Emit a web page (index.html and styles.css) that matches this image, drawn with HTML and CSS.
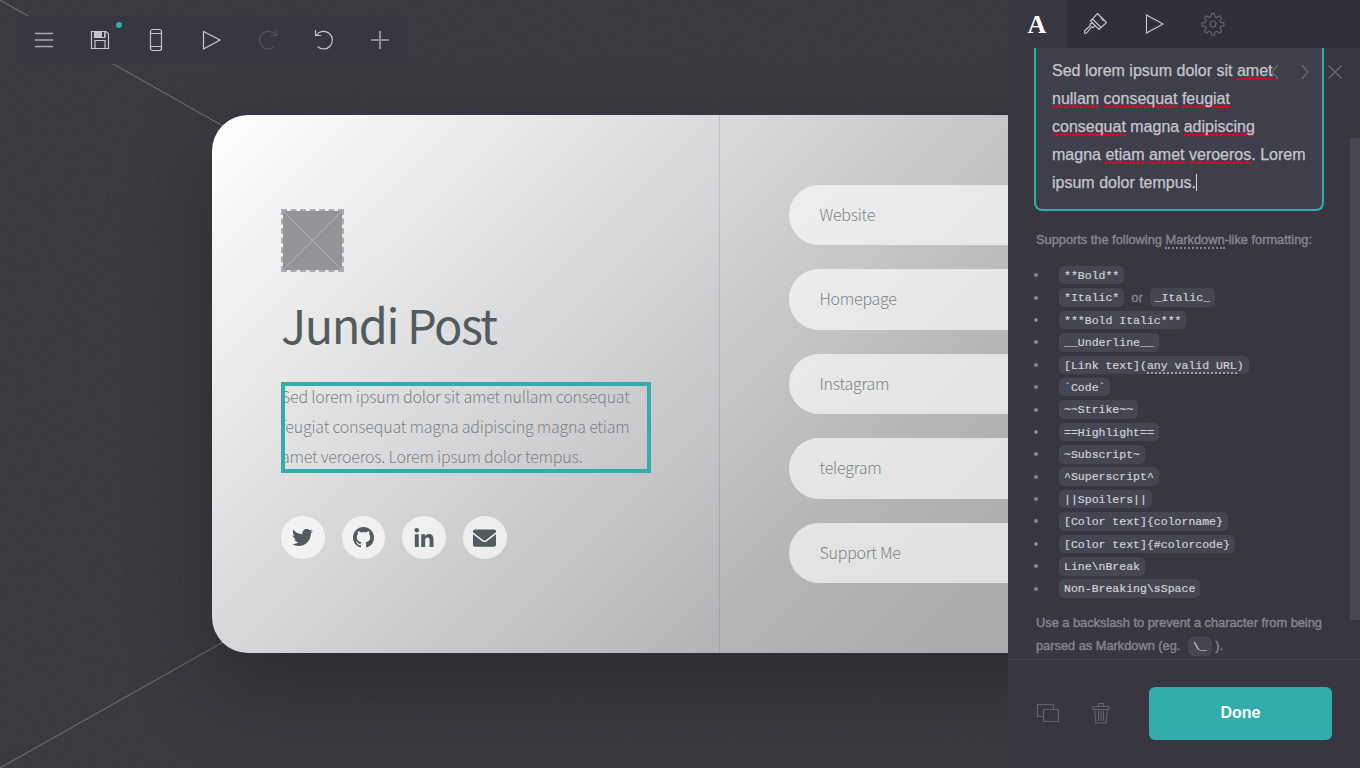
FILE: index.html
```html
<!DOCTYPE html>
<html lang="en">
<head>
<meta charset="utf-8">
<title>Site editor</title>
<link rel="stylesheet" href="styles.css">
</head>
<body>
<div class="editor">
  <main class="stage">
    <svg class="backdrop" width="1360" height="768" viewBox="0 0 1360 768">
      <filter id="grain" x="0" y="0" width="100%" height="100%">
        <feTurbulence type="fractalNoise" baseFrequency="0.55" numOctaves="2" seed="4"/>
      </filter>
      <rect class="grain" width="1360" height="768" filter="url(#grain)"/>
      <path class="diagonal" d="M0 0L1360 768M0 768L1360 0"/>
    </svg>

    <nav class="toolbar">
      <button class="tool"><svg viewBox="0 0 24 24"><path class="bars" d="M3 5.500h18M3 12h18M3 18.500h18"/></svg></button>
      <button class="tool"><svg viewBox="0 0 24 24"><path d="M3.500 3.500h14.500l2.500 2.500v14.500h-17zM7 20.500v-8h10v8"/><path d="M6.500 3.500h10.500v6h-10.500z"/><path class="solid" d="M7 4h7v5.500h-7zM16 4h1v5h-1z"/></svg><i class="unsaved"></i></button>
      <button class="tool"><svg viewBox="0 0 24 24"><rect x="6.500" y="1.500" width="11" height="21" rx="2"/><path d="M6.500 5.500h11M6.500 18.500h11"/></svg></button>
      <button class="tool"><svg viewBox="0 0 24 24"><path d="M3.500 3.500v17.500L20 12z"/></svg></button>
      <button class="tool dim"><svg viewBox="0 0 24 24"><path d="M18.500 18.500A8.800 8.800 0 1 1 19.500 7M20.500 2v5.500h-5.500"/></svg></button>
      <button class="tool"><svg viewBox="0 0 24 24"><path d="M5.500 18.500A8.800 8.800 0 1 0 4.500 7M3.500 2v5.500h5.500"/></svg></button>
      <button class="tool"><svg viewBox="0 0 24 24"><path class="plus" d="M12 3v18M3 12h18"/></svg></button>
    </nav>

    <article class="card">
      <section class="profile">
        <div class="placeholder"><svg viewBox="0 0 59 59"><path d="M0 0L59 59M59 0L0 59"/></svg></div>
        <h1 class="name">Jundi Post</h1>
        <p class="bio">Sed lorem ipsum dolor sit amet nullam consequat<br>feugiat consequat magna adipiscing magna etiam<br>amet veroeros. Lorem ipsum dolor tempus.</p>
        <div class="socials">
          <a class="social"><svg viewBox="0 0 512 512"><path d="M459.400 151.700c.3 4.500.3 9.100.3 13.600 0 138.700-105.600 298.600-298.600 298.600-59.500 0-114.700-17.200-161.100-47.100 8.400 1 16.600 1.300 25.300 1.300 49.100 0 94.200-16.600 130.300-44.800-46.100-1-84.800-31.200-98.100-72.800 6.500 1 13 1.600 19.800 1.600 9.400 0 18.800-1.300 27.600-3.600-48.100-9.700-84.100-52-84.100-103v-1.300c14 7.800 30.200 12.700 47.400 13.300-28.300-18.800-46.800-51-46.800-87.400 0-19.500 5.200-37.400 14.300-53 51.700 63.700 129.300 105.300 216.400 109.800-1.600-7.800-2.600-15.900-2.600-24 0-57.800 46.800-104.900 104.900-104.900 30.200 0 57.500 12.700 76.700 33.100 23.700-4.500 46.500-13.300 66.600-25.300-7.800 24.400-24.400 44.800-46.100 57.800 21.100-2.300 41.600-8.100 60.400-16.200-14.300 20.800-32.200 39.300-52.600 54.300z"/></svg></a>
          <a class="social"><svg viewBox="0 0 16 16"><path d="M8 0C3.580 0 0 3.580 0 8c0 3.540 2.290 6.530 5.470 7.590.4.070.55-.17.55-.38 0-.19-.01-.82-.01-1.490-2.010.37-2.530-.49-2.690-.94-.09-.23-.48-.94-.82-1.130-.28-.15-.68-.52-.01-.53.63-.01 1.080.58 1.230.82.72 1.210 1.870.87 2.330.66.07-.52.28-.87.51-1.070-1.780-.2-3.640-.89-3.640-3.950 0-.87.31-1.590.82-2.150-.08-.2-.36-1.020.08-2.120 0 0 .67-.21 2.200.82a7.600 7.600 0 0 1 4 0c1.530-1.040 2.200-.82 2.200-.82.44 1.100.16 1.920.08 2.120.51.56.82 1.270.82 2.150 0 3.070-1.870 3.750-3.650 3.950.29.25.54.73.54 1.480 0 1.070-.01 1.930-.01 2.200 0 .21.15.46.55.38A8 8 0 0 0 16 8c0-4.420-3.580-8-8-8z"/></svg></a>
          <a class="social linkedin"><svg viewBox="0 0 448 448"><path d="M100.300 448H7.400V148.900h92.900zM53.800 108.100C24.100 108.100 0 83.500 0 53.800a53.800 53.800 0 0 1 107.600 0c0 29.700-24.100 54.300-53.800 54.300zM447.900 448h-92.700V302.400c0-34.700-.7-79.200-48.300-79.200-48.300 0-55.700 37.700-55.700 76.700V448h-92.800V148.900h89.100v40.800h1.300c12.400-23.500 42.700-48.300 87.900-48.300 94 0 111.300 61.900 111.300 142.300V448z"/></svg></a>
          <a class="social mail"><svg viewBox="0 0 24 18"><path d="M2 0h20a2 2 0 0 1 2 2v1L13.500 11a2.500 2.500 0 0 1-3 0L0 3V2a2 2 0 0 1 2-2zM0 5l9.500 7.300a4.200 4.200 0 0 0 5 0L24 5v11a2 2 0 0 1-2 2H2a2 2 0 0 1-2-2z"/></svg></a>
        </div>
      </section>
      <section class="links">
        <a class="link">Website</a>
        <a class="link">Homepage</a>
        <a class="link">Instagram</a>
        <a class="link">telegram</a>
        <a class="link">Support Me</a>
      </section>
    </article>
  </main>

  <aside class="panel">
    <nav class="tabs">
      <button class="tab active">A</button>
      <button class="tab"><svg viewBox="0 0 24 24"><path d="M13.500 1.500L22.500 10.500l-7.500 7-8.500-8.500zM8.500 7l8.500 8.500M14.500 2.500l2 2.500M17 5l.5 2M19 7l-.5 2M8.500 11l2.500 2.500-2 2-1.500-.5-4 5c-1 1.500-2.500 2-3 .5s.5-2 1.500-3l4.500-4-.5-1.500z"/></svg></button>
      <button class="tab"><svg viewBox="0 0 24 24"><path d="M4.500 3v18L21 12z"/></svg></button>
      <button class="tab dim"><svg viewBox="0 0 24 24"><circle cx="12" cy="12" r="3"/><path d="M10.600 1.500h2.800l.6 3.100 2.100.9 2.600-1.800 2 2-1.800 2.600.9 2.100 3.100.6v2.800l-3.100.6-.9 2.100 1.800 2.600-2 2-2.600-1.800-2.100.9-.6 3.100h-2.800l-.6-3.100-2.100-.9-2.600 1.800-2-2 1.800-2.600-.9-2.100-3.100-.6v-2.800l3.100-.6.9-2.100-1.800-2.600 2-2 2.600 1.800 2.100-.9z"/></svg></button>
    </nav>
    <div class="content">
      <div class="field">Sed lorem ipsum dolor sit <s>amet</s><br><s>nullam</s> <s>consequat</s> <s>feugiat</s><br><s>consequat</s> magna <s>adipiscing</s><br>magna <s>etiam</s> <s>amet</s> <s>veroeros</s>. Lorem<br>ipsum dolor tempus.<i class="caret"></i></div>
      <p class="help">Supports the following <span class="dotted">Markdown</span>-like formatting:</p>
      <ul class="syntax">
        <li><code>**Bold**</code></li>
        <li><code>*Italic*</code><span class="or">or</span><code>_Italic_</code></li>
        <li><code>***Bold Italic***</code></li>
        <li><code>__Underline__</code></li>
        <li><code>[Link text](<span class="dotted">any valid URL</span>)</code></li>
        <li><code>`Code`</code></li>
        <li><code>~~Strike~~</code></li>
        <li><code>==Highlight==</code></li>
        <li><code>~Subscript~</code></li>
        <li><code>^Superscript^</code></li>
        <li><code>||Spoilers||</code></li>
        <li><code>[Color text]{colorname}</code></li>
        <li><code>[Color text]{#colorcode}</code></li>
        <li><code>Line\nBreak</code></li>
        <li><code>Non-Breaking\sSpace</code></li>
      </ul>
      <p class="help note">Use a backslash to prevent a character from being<br>parsed as Markdown (eg. <code>\_</code> ).</p>
      <div class="pager">
        <svg viewBox="0 0 16 16"><path d="M11 1L5 8l6 7"/></svg>
        <svg viewBox="0 0 16 16"><path d="M5 1l6 7-6 7"/></svg>
        <svg viewBox="0 0 16 16"><path d="M1.500 1.500l13 13M14.500 1.500l-13 13"/></svg>
      </div>
      <i class="thumb"></i>
    </div>
    <footer class="actions">
      <svg class="copy" viewBox="0 0 24 24"><path d="M7 15.500H1.500v-12h16V8M7.500 8.500h15v12h-15z"/></svg>
      <svg class="trash" viewBox="0 0 24 24"><path d="M4 5.500h16v3H4zM9.500 5.500v-3h5v3M5.500 8.500l1.500 13.500h10l1.500-13.500M9.500 10v10M12 10v10M14.500 10v10"/></svg>
      <button class="done">Done</button>
    </footer>
  </aside>
</div>
</body>
</html>
```
FILE: styles.css
```css
* { box-sizing: border-box; }
body { margin: 0; overflow: hidden; background: #38363d; font-family: "Liberation Sans", Arial, sans-serif; }
button { border: 0; padding: 0; background: none; color: inherit; font: inherit; }
svg { fill: none; stroke: currentColor; stroke-width: 1; display: block; }
.editor { display: flex; width: 1360px; height: 768px; overflow: hidden; }

.stage { position: relative; width: 1008px; height: 768px; overflow: hidden; padding: 16px 0 0 16px; flex: none; }
.backdrop { position: absolute; left: 0; top: 0; }
.grain { opacity: .06; }
.diagonal { stroke: #69686f; stroke-width: 1.200; }

.toolbar { position: relative; display: flex; width: 392px; height: 48px; border-radius: 6px; background: #373641; color: #c8c8ce; }
.tool { position: relative; width: 56px; height: 48px; display: flex; align-items: center; justify-content: center; }
.tool svg { width: 24px; height: 24px; stroke-width: 1.200; }
.tool .solid { fill: #c4c4ca; stroke: none; }
.tool .bars { stroke-width: 1.300; opacity: .8; }
.tool .plus { stroke-width: 2; opacity: .6; }
.tool.dim { color: #52515c; }
.unsaved { position: absolute; left: 44px; top: 6px; width: 6px; height: 6px; border-radius: 50%; background: #33adab; }

.card { position: relative; display: flex; width: 1016px; height: 538px; margin: 51px 0 0 196px; border-radius: 36px;
  background: linear-gradient(135deg, #fff 0, #d9d9db 372px, #b4b4b6 735px, #ababad 900px);
  box-shadow: 0 36px 80px rgba(20, 18, 24, .34); color: #525c5e; font-family: "Noto Sans CJK SC", "Source Sans Pro", sans-serif; }
.profile { width: 508px; padding: 94px 0 0 69px; border-right: 1px solid rgba(82, 92, 94, .2); }
.placeholder { width: 63px; height: 63px; border: 2px dashed #aeadb5; background: #949398 padding-box; color: #b1b0b6; }
.placeholder svg { width: 59px; height: 59px; }
.name { margin: 16px 0 0; height: 72px; line-height: 72px; font-size: 47px; font-weight: 400; letter-spacing: -1.500px; white-space: nowrap; }
.bio { position: relative; margin: 21px 0 0; width: 370px; height: 92px; line-height: 30px; font-size: 16px; font-weight: 300; letter-spacing: -.22px; color: #7d8385; white-space: nowrap; }
.bio::after { content: ""; position: absolute; inset: 1px 0 0; border: 4px solid #33adab; }
.socials { display: flex; gap: 17.200px; margin-top: 43px; }
.social { width: 43.500px; height: 43px; border-radius: 50%; background: rgba(255, 255, 255, .66); display: flex; align-items: center; justify-content: center; }
.social svg { width: 21px; height: 21px; fill: #525c5e; stroke: none; }
.social.linkedin svg { width: 20px; height: 19px; }
.social.mail svg { width: 23px; height: 18px; }
.links { flex: 1; display: flex; flex-direction: column; gap: 24.200px; padding: 70px 69px 0; }
.link { height: 60.300px; padding-left: 30.500px; border-radius: 30px; background: rgba(255, 255, 255, .64); line-height: 58px; font-size: 16px; font-weight: 300; letter-spacing: -.25px; color: #7d8385; }

.panel { width: 352px; height: 768px; display: flex; flex-direction: column; background: #373641; color: #85848d; }
.tabs { display: flex; height: 48px; flex: none; background: #2f303b; color: #c8c8cf; }
.tab { width: 58.600px; height: 48px; display: flex; align-items: center; justify-content: center; }
.tab.active { background: #373641; color: #fff; font: bold 26px/30px "Liberation Serif", serif; padding-top: 2px; padding-right: 1px; }
.tab svg { width: 24px; height: 24px; stroke-width: 1.100; }
.tab.dim { color: #666570; }
.content { position: relative; flex: 1; overflow: hidden; padding: 0 26px; }
.field { width: 290px; height: 163px; padding: 9px 16px 0; border: 2px solid #33adab; border-top: 0; border-radius: 0 0 8px 8px; background: #3f3f4c; color: #c6c6cc; font-size: 16px; line-height: 28px; white-space: nowrap; -webkit-text-stroke: .25px; }
.field s { text-decoration: none; padding-bottom: 1px; background:
  repeating-linear-gradient(90deg, #f00810 0 2px, transparent 2px 4px) 0 100% / 100% 1px no-repeat,
  linear-gradient(#e00a12, #e00a12) 0 calc(100% - 1px) / 100% 1px no-repeat; }
.caret { display: inline-block; width: 1px; height: 17px; background: #d8d8dc; vertical-align: -3px; }
.help { margin: 17px 0 0 2px; font-size: 12.800px; line-height: 23px; white-space: nowrap; -webkit-text-stroke: .45px; }
.dotted { border-bottom: 2px dotted #85848d; }
.syntax { list-style: none; margin: 13px 0 0; padding: 0; }
.syntax li { display: flex; align-items: center; height: 22.400px; }
.syntax li::before { content: ""; width: 4px; height: 4px; margin-right: 21px; border-radius: 50%; background: #8a8992; }
code { height: 18.500px; padding: 0 5px; border-radius: 5px; background: #454554; color: #d2d2d6; font: 11.520px/19px "Liberation Mono", monospace; -webkit-text-stroke: .2px; white-space: pre; }
code .dotted { border-color: #a09fa8; }
.or { margin: 0 7px; font-size: 12.800px; -webkit-text-stroke: .4px; }
.note { margin-top: 11px; }
.note code { display: inline-block; margin: 0 0 0 4px; vertical-align: middle; }
.pager { position: absolute; top: 16px; right: 17px; display: flex; gap: 14px; color: #696874; }
.pager svg { width: 16px; height: 16px; stroke-width: 1.200; }
.thumb { position: absolute; right: 0; top: 90px; width: 10px; height: 482px; background: #474755; }
.actions { display: flex; align-items: center; height: 109px; padding: 0 28px 2px; border-top: 1px solid #474653; color: #62616c; }
.actions svg { width: 24px; height: 24px; stroke-width: 1.200; }
.trash { margin-left: 29px; }
.done { margin-left: auto; width: 183px; height: 53px; border-radius: 6px; background: #33adab; color: #fff; font-size: 16px; font-weight: 700; }
```
